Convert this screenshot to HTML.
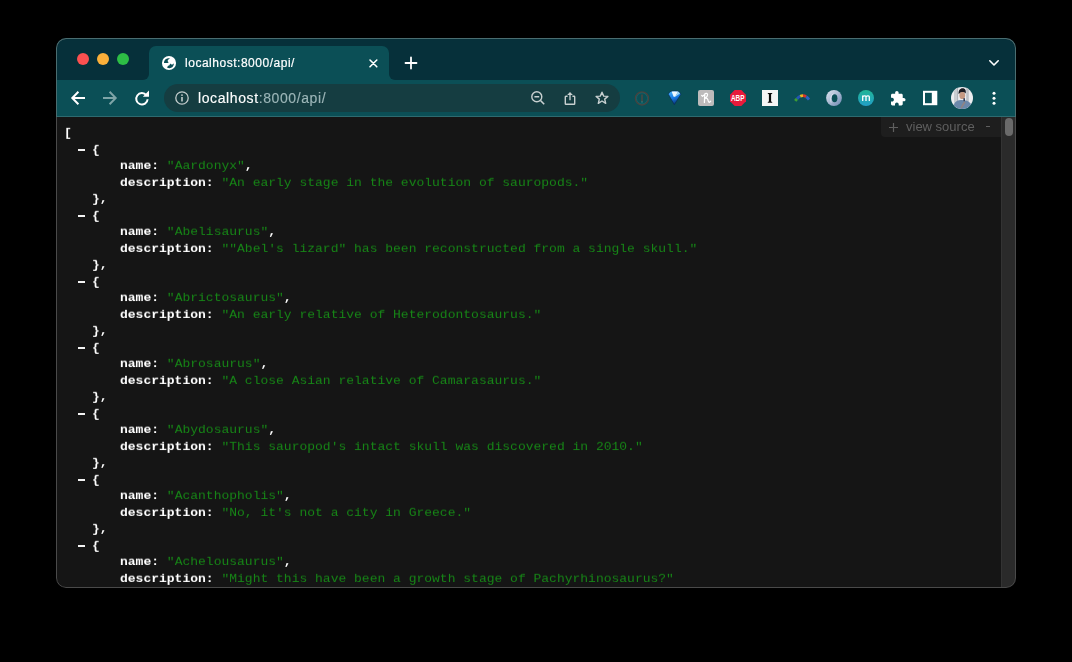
<!DOCTYPE html>
<html><head><meta charset="utf-8">
<style>
*{margin:0;padding:0;box-sizing:border-box}
html,body{width:1072px;height:662px;background:#000;overflow:hidden;font-family:"Liberation Sans",sans-serif}
#win{position:absolute;left:56px;top:38px;width:960px;height:550px;border-radius:10px;overflow:hidden;background:#151515}
.a{position:absolute}
#frame{left:0;top:0;width:960px;height:42px;background:#06303a}
#tab{left:93px;top:8px;width:240px;height:34px;background:#0b4f56;border-radius:7px 7px 0 0}
.flare{position:absolute;top:36px;width:6px;height:6px;background:#0b4f56;overflow:hidden}
.flare i{position:absolute;left:0;top:0;width:12px;height:12px;border-radius:50%;background:#06303a}
#toolbar{left:0;top:42px;width:960px;height:36px;background:#0b4f56}
#tbline{left:0;top:78px;width:960px;height:1px;background:#2d6a6f}
#omni{left:108px;top:46px;width:456px;height:28px;border-radius:14px;background:#153d41}
#content{left:0;top:79px;width:960px;height:471px;background:#151515}
#border{left:0;top:0;width:960px;height:550px;border-radius:10px;border:1px solid #4a4a4a}
#bordertop{left:0;top:0;width:960px;height:79px;border-radius:10px 10px 0 0;border:1px solid #4a6d70;border-bottom:none}
#border2{left:0;top:0;width:960px;height:80px;border-radius:10px 10px 0 0;border:1px solid #3d7075;border-bottom:none}
.dot{position:absolute;top:15px;width:12px;height:12px;border-radius:50%}
.ln{position:absolute;transform:scaleY(0.92);transform-origin:0 11.5px;font-family:"Liberation Mono",monospace;font-size:13px;line-height:16px;color:#fff;white-space:pre}
.ln b{font-weight:bold}
.br{font-weight:bold}
.s{color:#178517}
.bar{position:absolute;left:22px;width:7px;height:2px;background:#f2f2f2}
.tabtxt{left:129px;top:17px;-webkit-text-stroke:0.2px #fff;font-size:12px;letter-spacing:0.52px;color:#fff;white-space:pre;line-height:16px}
.url{left:142px;top:51px;-webkit-text-stroke:0.15px currentColor;font-size:14px;letter-spacing:0.6px;color:#fff;white-space:pre;line-height:18px}
.url span{color:#9bb5b7}
svg.a{overflow:visible}
.ln,.tabtxt,.url,.vst{will-change:transform}
#vs{left:825px;top:79px;width:120px;height:20px;background:#1e1e1e;border-radius:0 0 0 4px}
.vst{left:850px;top:81px;font-size:13px;color:#5f5f5f;white-space:pre;line-height:16px}
#sb{left:945px;top:79px;width:15px;height:471px;background:#2a2a2a;border-left:1px solid #333}
#thumb{left:949px;top:80px;width:8px;height:18px;border-radius:4px;background:#6a6a6a}
</style></head><body>
<div id="win">
  <div id="frame" class="a"></div>
  <div id="tab" class="a"></div>
  <div class="flare" style="left:87px"><i style="left:-6px;top:-6px"></i></div>
  <div class="flare" style="left:333px"><i style="left:0;top:-6px"></i></div>
  <div id="toolbar" class="a"></div>
  <div id="omni" class="a"></div>
  <div id="tbline" class="a"></div>
  <div id="content" class="a"></div>
  <div class="dot" style="left:21px;background:#fb5050"></div>
  <div class="dot" style="left:41px;background:#fbb03a"></div>
  <div class="dot" style="left:61px;background:#2dbe45"></div>

  <!-- tab globe -->
  <svg class="a" style="left:106px;top:17.8px" width="14" height="14" viewBox="0 0 14 14">
    <circle cx="7" cy="7" r="7.05" fill="#fff"/>
    <path d="M2 7C1.9 5.5 2.5 4.3 3.6 3.2C4.8 2.3 6.3 2.2 7.9 2.4C7.1 2.9 6.4 3.2 6.1 3.7C5.6 4.3 5.5 5 5.8 5.4C6.1 5.8 6.9 6 6.5 6.5C5.9 7.1 4.5 7.2 2 7Z" fill="#0b4f56"/>
    <path d="M5 11.5C5.5 10.4 6.4 9.5 7.5 9.2C7.9 8.8 7.9 8 8.1 7.6C8.8 8.3 9.2 8.6 9.7 8.6C10.6 8.5 11.3 7.9 11.9 7.2C11.9 8.4 11.6 9.3 11.2 10C10.6 11 9.9 11.5 9.1 11.8C8 12.3 6.4 12.3 5 11.5Z" fill="#0b4f56"/>
  </svg>
  <div class="a tabtxt">localhost:8000/api/</div>
  <!-- close x -->
  <svg class="a" style="left:312.5px;top:20.5px" width="9" height="9" viewBox="0 0 9 9"><path d="M1 1L7.8 7.8M7.8 1L1 7.8" stroke="#fff" stroke-width="1.6" stroke-linecap="round"/></svg>
  <!-- plus -->
  <svg class="a" style="left:349px;top:19px" width="12" height="12" viewBox="0 0 12 12"><path d="M6 0.5V11.5M0.5 6H11.5" stroke="#fff" stroke-width="1.8" stroke-linecap="round"/></svg>
  <!-- chevron -->
  <svg class="a" style="left:933px;top:22px" width="10" height="6" viewBox="0 0 10 6"><path d="M0.8 0.8L5 5L9.2 0.8" stroke="#fff" stroke-width="1.6" fill="none" stroke-linecap="round" stroke-linejoin="round"/></svg>

  <!-- back -->
  <svg class="a" style="left:15px;top:53px" width="14" height="14" viewBox="0 0 14 14"><path d="M14 7H1.8M7.4 0.8L1.3 7L7.4 13.2" stroke="#fff" stroke-width="2" fill="none"/></svg>
  <!-- forward -->
  <svg class="a" style="left:47px;top:53px" width="14" height="14" viewBox="0 0 14 14"><path d="M0 7H12.2M6.6 0.8L12.7 7L6.6 13.2" stroke="#7ea4a7" stroke-width="2" fill="none"/></svg>
  <!-- reload -->
  <svg class="a" style="left:79px;top:53px" width="14" height="14" viewBox="0 0 14 14"><path d="M11.4 4.3A5.7 5.7 0 1 0 12.6 8.2" stroke="#fff" stroke-width="2" fill="none"/><path d="M7.8 5.8H14V-0.4Z" fill="#fff"/></svg>
  <!-- info -->
  <svg class="a" style="left:119px;top:53px" width="14" height="14" viewBox="0 0 14 14"><circle cx="7" cy="7" r="6.2" stroke="#c3cccc" stroke-width="1.3" fill="none"/><rect x="6.2" y="6" width="1.6" height="4.5" fill="#c3cccc"/><circle cx="7" cy="4.1" r="0.95" fill="#c3cccc"/></svg>
  <div class="a url">localhost<span>:8000/api/</span></div>
  <!-- zoom -->
  <svg class="a" style="left:475px;top:53px" width="14" height="14" viewBox="0 0 14 14"><circle cx="5.8" cy="5.8" r="5" stroke="#c8d0d0" stroke-width="1.4" fill="none"/><path d="M3.4 5.8H8.2" stroke="#c8d0d0" stroke-width="1.4"/><path d="M9.5 9.5L13.2 13.2" stroke="#c8d0d0" stroke-width="1.6"/></svg>
  <!-- share -->
  <svg class="a" style="left:507px;top:53px" width="14" height="14" viewBox="0 0 14 14"><path d="M4.6 5.3H2.9Q2.3 5.3 2.3 5.9V12.7Q2.3 13.3 2.9 13.3H11.1Q11.7 13.3 11.7 12.7V5.9Q11.7 5.3 11.1 5.3H9.4" stroke="#c8d0d0" stroke-width="1.4" fill="none"/><path d="M7 2V9.2" stroke="#a9b8b9" stroke-width="1.6"/><path d="M4.2 3.9L7 1L9.8 3.9Z" fill="#c8d0d0"/></svg>
  <!-- star -->
  <svg class="a" style="left:539px;top:53px" width="14" height="14" viewBox="0 0 14 14"><path d="M7 1.2L8.7 5.1L12.9 5.4L9.7 8.1L10.7 12.3L7 10L3.3 12.3L4.3 8.1L1.1 5.4L5.3 5.1Z" stroke="#c8d0d0" stroke-width="1.4" fill="none" stroke-linejoin="round"/></svg>

  <!-- ext 1: gray circle -->
  <svg class="a" style="left:578px;top:52px" width="16" height="16" viewBox="0 0 16 16"><circle cx="8" cy="8.4" r="6.5" stroke="#48433f" stroke-width="1.5" fill="none"/><circle cx="8" cy="8.4" r="5.5" stroke="#1f6b70" stroke-width="0.6" fill="none"/><path d="M8 4.6V12" stroke="#4e4843" stroke-width="1.5"/><circle cx="8" cy="12" r="0.7" fill="#2a8a90"/></svg>
  <!-- ext 2: diamond -->
  <svg class="a" style="left:611px;top:52px" width="15" height="16" viewBox="0 0 15 16"><defs><linearGradient id="g2" x1="0" y1="0" x2="0.3" y2="1"><stop offset="0" stop-color="#49b8ff"/><stop offset="0.6" stop-color="#1576e0"/><stop offset="1" stop-color="#0a3a80"/></linearGradient></defs><path d="M1.5 4.6C1.5 2.3 3.6 0.9 7.6 0.9C11.6 0.9 13.7 2.3 13.7 4.6L7.3 14.7Z" fill="url(#g2)" stroke="#0a2c55" stroke-width="0.7"/><path d="M4.6 1.6H11.2L8.2 6.8H6.6Z" fill="#eef8ff"/><path d="M11.2 1.6L13 3.6L8.2 6.8Z" fill="#9fd6f5"/></svg>
  <!-- ext 3: k square -->
  <div class="a" style="left:642px;top:52px;width:16px;height:16px;border-radius:2px;background:#bdbbbb"></div>
  <svg class="a" style="left:642px;top:52px" width="16" height="16" viewBox="0 0 16 16"><path d="M3.7 5.5L4.6 6.3L6.5 4.6M6.8 3.9L6.4 12.5M6.8 3.9C7.8 3 9.6 3.2 9.6 4.8C9.6 6.3 8.2 7.5 6.9 8.3M6.9 8.4C8.2 8 9.4 8.3 9.9 9.8C10.2 11 10.3 12.4 11.2 12.3C11.9 12.2 12.4 11.6 12.7 11.2" stroke="#fff" stroke-width="1.25" fill="none" stroke-linecap="round" stroke-linejoin="round"/></svg>
  <!-- ext 4: ABP -->
  <svg class="a" style="left:674px;top:52px" width="16" height="16" viewBox="0 0 16 16"><path d="M4.7 0H11.3L16 4.7V11.3L11.3 16H4.7L0 11.3V4.7Z" fill="#e81a3b"/><text x="1" y="11" font-family="Liberation Sans" font-weight="bold" font-size="8.4" fill="#fff" textLength="13.5" lengthAdjust="spacingAndGlyphs">ABP</text></svg>
  <!-- ext 5: I -->
  <div class="a" style="left:706px;top:52px;width:16px;height:16px;background:#f5f5f5"></div>
  <svg class="a" style="left:706px;top:52px" width="16" height="16" viewBox="0 0 16 16"><path d="M5.8 3H10.2V3.7Q9.1 3.8 9.1 4.6V11.1Q9.1 11.9 10.2 12V12.7H5.8V12Q6.9 11.9 6.9 11.1V4.6Q6.9 3.8 5.8 3.7Z" fill="#0a0a0a"/></svg>
  <!-- ext 6: rainbow -->
  <svg class="a" style="left:738px;top:52px" width="16" height="16" viewBox="0 0 16 16">
    <g fill="none" stroke-width="2.8">
    <path d="M1.2 10.9Q8.5 1.2 15 9.6" stroke="#3d9c35" stroke-dasharray="2.7 100" stroke-dashoffset="0"/>
    <path d="M1.2 10.9Q8.5 1.2 15 9.6" stroke="#2355b5" stroke-dasharray="4 100" stroke-dashoffset="-2.7"/>
    <path d="M1.2 10.9Q8.5 1.2 15 9.6" stroke="#e9b521" stroke-dasharray="3 100" stroke-dashoffset="-6.7"/>
    <path d="M1.2 10.9Q8.5 1.2 15 9.6" stroke="#d8332b" stroke-dasharray="3.3 100" stroke-dashoffset="-9.7"/>
    <path d="M1.2 10.9Q8.5 1.2 15 9.6" stroke="#2a62c2" stroke-dasharray="4 100" stroke-dashoffset="-13"/>
    </g>
  </svg>
  <!-- ext 7: blue swirl -->
  <svg class="a" style="left:770px;top:52px" width="16" height="16" viewBox="0 0 16 16"><defs><linearGradient id="g7" x1="0" y1="0" x2="1" y2="1"><stop offset="0" stop-color="#dfe7f1"/><stop offset="0.5" stop-color="#a9b9d2"/><stop offset="1" stop-color="#6c86b1"/></linearGradient></defs><ellipse cx="8" cy="8" rx="7.9" ry="8.1" fill="url(#g7)"/><ellipse cx="8.6" cy="8.2" rx="2.8" ry="4" fill="#0b4f56"/><path d="M5.2 12.5C4 10 4.5 5 7.5 3.8" stroke="#eef2f8" stroke-width="0.9" fill="none" opacity="0.7"/></svg>
  <!-- ext 8: m circle -->
  <svg class="a" style="left:802px;top:52px" width="16" height="16" viewBox="0 0 16 16"><defs><linearGradient id="g8" x1="0" y1="0" x2="0" y2="1"><stop offset="0" stop-color="#20b596"/><stop offset="1" stop-color="#229fc8"/></linearGradient></defs><circle cx="8" cy="8" r="8" fill="url(#g8)"/><path d="M4.7 11V5.6M4.7 7C4.9 5.5 8 5.3 8 7V11M8 7C8.2 5.5 11.3 5.3 11.3 7V11" stroke="#fff" stroke-width="1.3" fill="none"/></svg>
  <!-- puzzle -->
  <svg class="a" style="left:834.8px;top:52.8px" width="14.5" height="14.5" viewBox="2 1 21 21"><path d="M20.5 11H19V7c0-1.1-.9-2-2-2h-4V3.5C13 2.12 11.88 1 10.5 1S8 2.12 8 3.5V5H4c-1.1 0-1.99.9-1.99 2v3.8H3.5c1.49 0 2.7 1.21 2.7 2.7s-1.21 2.7-2.7 2.7H2V20c0 1.1.9 2 2 2h3.8v-1.5c0-1.490 1.21-2.7 2.7-2.7 1.49 0 2.7 1.21 2.7 2.7V22H17c1.1 0 2-.9 2-2v-4h1.5c1.38 0 2.5-1.12 2.5-2.5S21.88 11 20.5 11z" fill="#fff"/></svg>
  <!-- sidebar -->
  <svg class="a" style="left:867px;top:53px" width="15" height="15" viewBox="0 0 15 15"><rect x="1" y="0.8" width="12.3" height="12.4" stroke="#fff" stroke-width="2" fill="none"/><rect x="8.8" y="0.8" width="4.5" height="12.4" fill="#fff"/></svg>
  <!-- avatar -->
  <svg class="a" style="left:895px;top:48.8px" width="22" height="22" viewBox="0 0 22 22"><defs><clipPath id="cav"><circle cx="11" cy="11" r="11"/></clipPath></defs>
    <g clip-path="url(#cav)"><rect width="22" height="22" fill="#eceef0"/><rect x="3" y="0" width="3.2" height="22" fill="#c9cdd1"/><rect x="6.2" y="0" width="0.9" height="22" fill="#a3a9b0"/><rect x="15.2" y="0" width="2.6" height="22" fill="#bcc1c6"/>
    <path d="M2.5 22L3.2 17C4.2 14.2 7 13.2 10 13C14 12.9 18 13.8 19.6 16.5L21 22Z" fill="#6b88aa"/>
    <path d="M9.5 21C10.5 18 12 15.5 13.5 14.2L14.6 15.3C13.6 17.3 11.8 20 10.6 21.5Z" fill="#8d8486"/>
    <ellipse cx="11.3" cy="8.4" rx="2.9" ry="3.7" fill="#c59a83"/>
    <path d="M7.7 7.3C7.1 3.6 9 1.3 11.6 1.3C14.3 1.3 15.3 3.5 14.7 6.6C13.8 5.1 12.1 4.8 10.6 5C9.5 5.2 8.5 6 7.7 7.3Z" fill="#1d1e24"/>
    <rect x="12.4" y="11.2" width="1.6" height="3" fill="#33415a"/>
    </g></svg>
  <!-- kebab -->
  <svg class="a" style="left:936px;top:53px" width="4" height="14" viewBox="0 0 4 14"><circle cx="2" cy="2.2" r="1.5" fill="#fff"/><circle cx="2" cy="7.2" r="1.5" fill="#fff"/><circle cx="2" cy="12.2" r="1.5" fill="#fff"/></svg>

  <!-- content -->
<div class="ln br" style="top:87.0px;left:8px">[</div>
<div class="bar" style="top:111.0px"></div><div class="ln br" style="top:103.5px;left:36px">{</div>
<div class="ln" style="top:120.0px;left:63.5px"><b>name:</b> <span class="s">"Aardonyx"</span><b>,</b></div>
<div class="ln" style="top:136.5px;left:63.5px"><b>description:</b> <span class="s">"An early stage in the evolution of sauropods."</span></div>
<div class="ln br" style="top:153.0px;left:36px">},</div>
<div class="bar" style="top:177.0px"></div><div class="ln br" style="top:169.5px;left:36px">{</div>
<div class="ln" style="top:186.0px;left:63.5px"><b>name:</b> <span class="s">"Abelisaurus"</span><b>,</b></div>
<div class="ln" style="top:202.5px;left:63.5px"><b>description:</b> <span class="s">"&quot;Abel&#x27;s lizard&quot; has been reconstructed from a single skull."</span></div>
<div class="ln br" style="top:219.0px;left:36px">},</div>
<div class="bar" style="top:243.0px"></div><div class="ln br" style="top:235.5px;left:36px">{</div>
<div class="ln" style="top:252.0px;left:63.5px"><b>name:</b> <span class="s">"Abrictosaurus"</span><b>,</b></div>
<div class="ln" style="top:268.5px;left:63.5px"><b>description:</b> <span class="s">"An early relative of Heterodontosaurus."</span></div>
<div class="ln br" style="top:285.0px;left:36px">},</div>
<div class="bar" style="top:309.0px"></div><div class="ln br" style="top:301.5px;left:36px">{</div>
<div class="ln" style="top:318.0px;left:63.5px"><b>name:</b> <span class="s">"Abrosaurus"</span><b>,</b></div>
<div class="ln" style="top:334.5px;left:63.5px"><b>description:</b> <span class="s">"A close Asian relative of Camarasaurus."</span></div>
<div class="ln br" style="top:351.0px;left:36px">},</div>
<div class="bar" style="top:375.0px"></div><div class="ln br" style="top:367.5px;left:36px">{</div>
<div class="ln" style="top:384.0px;left:63.5px"><b>name:</b> <span class="s">"Abydosaurus"</span><b>,</b></div>
<div class="ln" style="top:400.5px;left:63.5px"><b>description:</b> <span class="s">"This sauropod&#x27;s intact skull was discovered in 2010."</span></div>
<div class="ln br" style="top:417.0px;left:36px">},</div>
<div class="bar" style="top:441.0px"></div><div class="ln br" style="top:433.5px;left:36px">{</div>
<div class="ln" style="top:450.0px;left:63.5px"><b>name:</b> <span class="s">"Acanthopholis"</span><b>,</b></div>
<div class="ln" style="top:466.5px;left:63.5px"><b>description:</b> <span class="s">"No, it&#x27;s not a city in Greece."</span></div>
<div class="ln br" style="top:483.0px;left:36px">},</div>
<div class="bar" style="top:507.0px"></div><div class="ln br" style="top:499.5px;left:36px">{</div>
<div class="ln" style="top:516.0px;left:63.5px"><b>name:</b> <span class="s">"Achelousaurus"</span><b>,</b></div>
<div class="ln" style="top:532.5px;left:63.5px"><b>description:</b> <span class="s">"Might this have been a growth stage of Pachyrhinosaurus?"</span></div>
<div class="ln br" style="top:549.0px;left:36px">},</div>

  <div id="vs" class="a"></div>
  <svg class="a" style="left:833px;top:84.5px" width="9" height="9" viewBox="0 0 9 9"><path d="M4.5 0V9M0 4.5H9" stroke="#5f5f5f" stroke-width="1.2"/></svg>
  <div class="a vst">view source</div>
  <div class="a" style="left:930px;top:88px;width:4px;height:1.2px;background:#5f5f5f"></div>
  <div id="sb" class="a"></div>
  <div id="thumb" class="a"></div>
  <div id="border" class="a"></div>
  <div id="bordertop" class="a"></div>
</div>
</body></html>
